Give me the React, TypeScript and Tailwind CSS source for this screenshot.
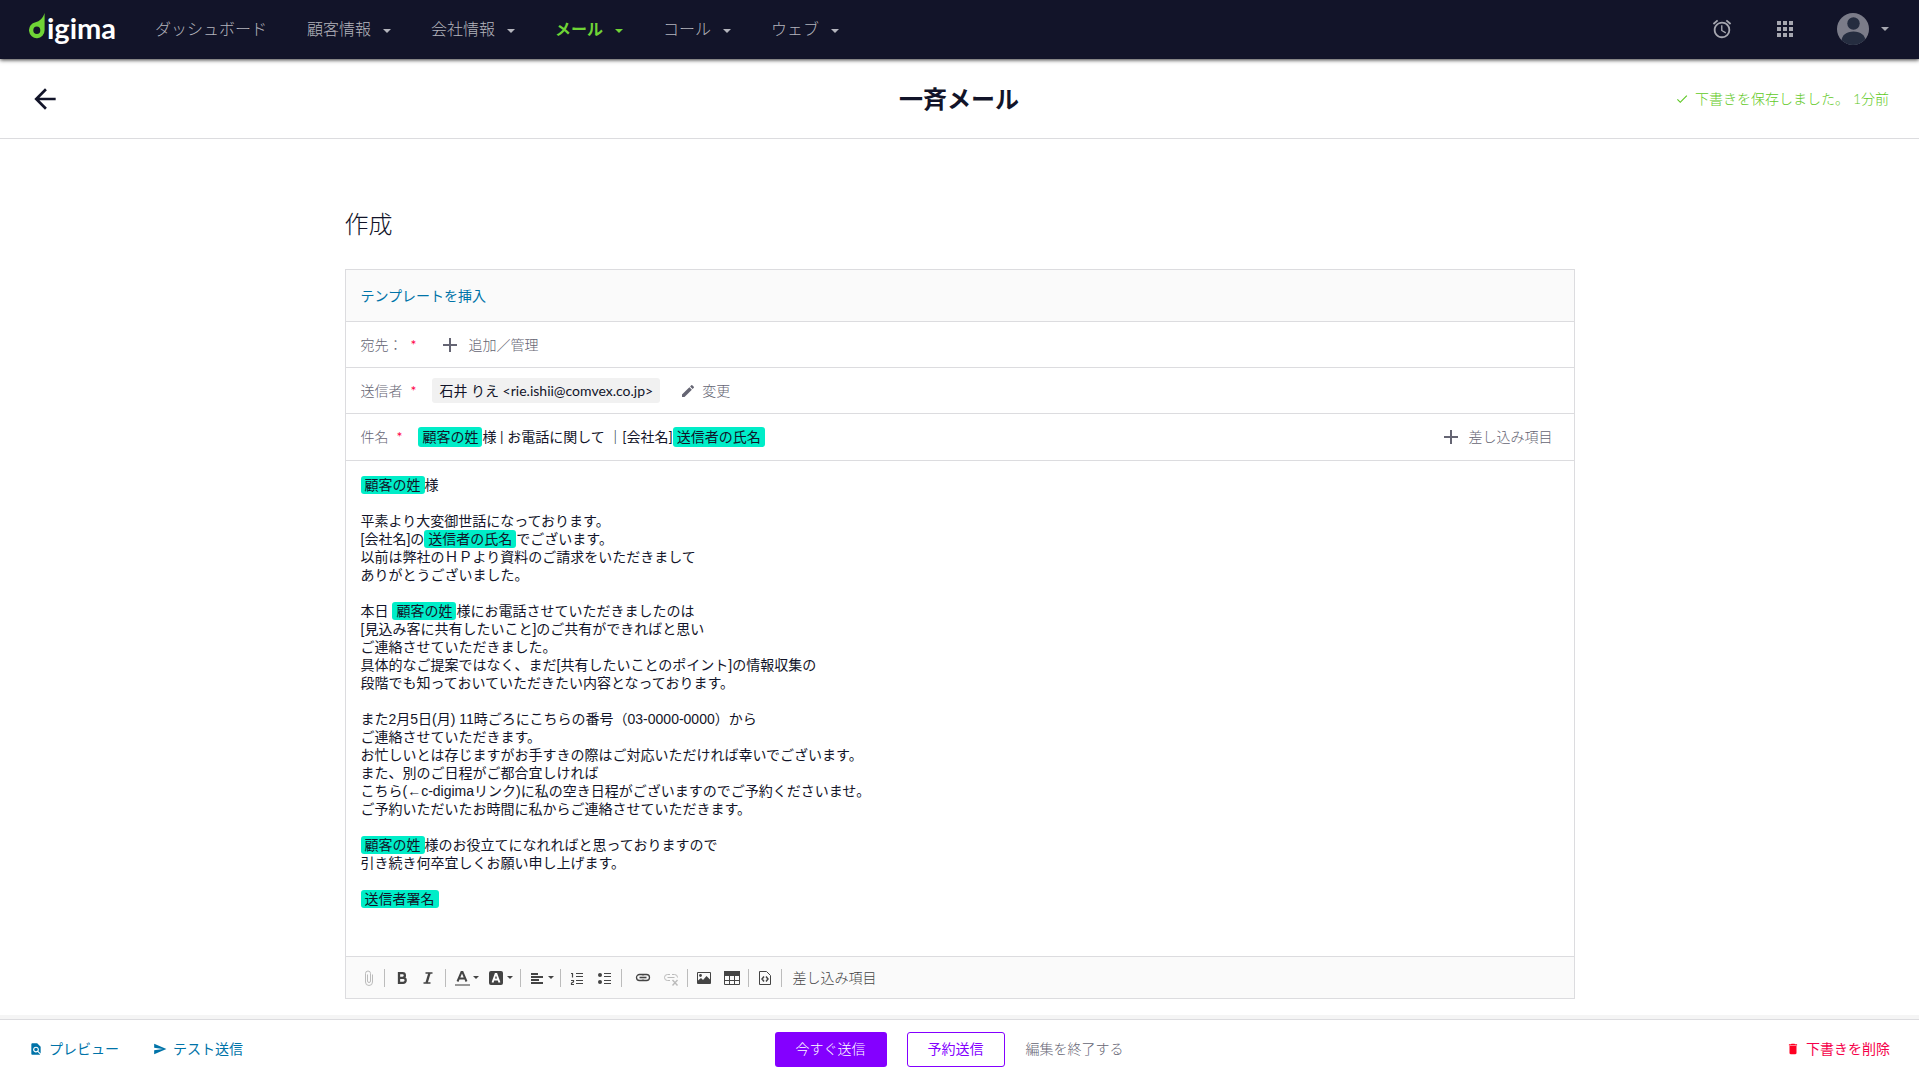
import type { ReactNode } from 'react';
import {
  MdAdd,
  MdAlarm,
  MdApps,
  MdArrowBack,
  MdCheck,
  MdDelete,
  MdEdit,
  MdFindInPage,
  MdSend,
} from 'react-icons/md';

interface NavItem {
  label: string;
  hasMenu?: boolean;
  active?: boolean;
}

const NAV_ITEMS: NavItem[] = [
  { label: 'ダッシュボード' },
  { label: '顧客情報', hasMenu: true },
  { label: '会社情報', hasMenu: true },
  { label: 'メール', hasMenu: true, active: true },
  { label: 'コール', hasMenu: true },
  { label: 'ウェブ', hasMenu: true },
];

// {{...}} marks a merge field
const BODY_LINES = [
  '{{顧客の姓}}様',
  '',
  '平素より大変御世話になっております。',
  '[会社名]の{{送信者の氏名}}でございます。',
  '以前は弊社のＨＰより資料のご請求をいただきまして',
  'ありがとうございました。',
  '',
  '本日 {{顧客の姓}}様にお電話させていただきましたのは',
  '[見込み客に共有したいこと]のご共有ができればと思い',
  'ご連絡させていただきました。',
  '具体的なご提案ではなく、まだ[共有したいことのポイント]の情報収集の',
  '段階でも知っておいていただきたい内容となっております。',
  '',
  'また2月5日(月) 11時ごろにこちらの番号（03-0000-0000）から',
  'ご連絡させていただきます。',
  'お忙しいとは存じますがお手すきの際はご対応いただければ幸いでございます。',
  'また、別のご日程がご都合宜しければ',
  'こちら(←c-digimaリンク)に私の空き日程がございますのでご予約くださいませ。',
  'ご予約いただいたお時間に私からご連絡させていただきます。',
  '',
  '{{顧客の姓}}様のお役立てになれればと思っておりますので',
  '引き続き何卒宜しくお願い申し上げます。',
  '',
  '{{送信者署名}}',
];

const SUBJECT = '{{顧客の姓}}様 | お電話に関して ｜[会社名]{{送信者の氏名}}';

const renderFields = (text: string) =>
  text.split(/(\{\{.+?\}\})/).map((part, index) =>
    part.startsWith('{{') ? (
      <span key={index} className="inline-block rounded-[3px] bg-[#00edc8] px-1">
        {part.slice(2, -2)}
      </span>
    ) : (
      part
    ),
  );

const Caret = ({ className = '' }: { className?: string }) => (
  <svg viewBox="0 0 8 4" className={`h-1 w-2 ${className}`} fill="currentColor" aria-hidden="true">
    <path d="M0 0h8L4 4z" />
  </svg>
);

const Logo = () => (
  <a href="#" className="flex h-8 w-[86px] items-start text-white">
    <svg viewBox="0 0 18 32" className="h-8 w-[18px] shrink-0" aria-hidden="true">
      <path
        fill="#6fd436"
        fillRule="evenodd"
        d="M15.600 0V17.200a7.800 8.100 0 1 1-9-8C10.500 8.500 14 5 15.600 0zM7.800 13.400a3.500 3.800 0 1 0 0 7.600 3.500 3.800 0 0 0 0-7.600z"
      />
    </svg>
    <span className="text-[29px] leading-[30px] font-bold">igima</span>
  </a>
);

const Header = () => (
  <header className="relative z-10 flex h-[59px] items-center bg-[#121429] pr-[30px] pb-0.5 pl-[29px] text-[#a6a7b0] shadow-[0_1px_4px_rgba(0,0,0,0.8)]">
    <Logo />
    <nav className="ml-10 flex flex-1 items-center gap-10">
      {NAV_ITEMS.map((item) => (
        <a
          key={item.label}
          href="#"
          className={`flex items-center gap-3 text-base leading-6 ${item.active ? 'font-bold text-[#6fd436]' : 'font-light text-[#b4b5bd]'}`}
        >
          {item.label}
          {item.hasMenu && <Caret className="mt-1" />}
        </a>
      ))}
    </nav>
    <button type="button" aria-label="アラーム" className="mr-10">
      <MdAlarm size={22} />
    </button>
    <button type="button" aria-label="アプリ" className="mr-10">
      <MdApps size={24} />
    </button>
    <button type="button" aria-label="アカウント" className="flex items-center gap-3">
      <svg viewBox="0 0 32 32" className="size-8" aria-hidden="true">
        <clipPath id="avatar">
          <circle cx="16" cy="16" r="16" />
        </clipPath>
        <g clipPath="url(#avatar)">
          <rect width="32" height="32" fill="#7b7c89" />
          <circle cx="16.500" cy="10.500" r="6.200" fill="#252d40" />
          <path d="M4.500 32v-4c0-5.500 5-9.500 12-9.500s12 4 12 9.500v4z" fill="#252d40" />
        </g>
      </svg>
      <Caret />
    </button>
  </header>
);

const TitleBar = () => (
  <div className="grid h-20 grid-cols-[1fr_auto_1fr] items-center border-b border-[#dcdcdf] pr-[30px] pl-[29px]">
    <a href="#" aria-label="戻る" className="justify-self-start text-[#121429]">
      <MdArrowBack size={32} />
    </a>
    <h1 className="text-2xl font-bold">一斉メール</h1>
    <p className="flex items-center gap-1.5 justify-self-end font-light text-[#5fc926]">
      <MdCheck size={14} />
      <span>下書きを保存しました。 1分前</span>
    </p>
  </div>
);

const Required = () => <span className="ml-2 text-[#ff0044]">*</span>;

const Row = ({ children, className = 'h-[46px]' }: { children: ReactNode; className?: string }) => (
  <div className={`flex items-center border-b border-[#dcdcdf] px-[15px] ${className}`}>{children}</div>
);

const Separator = () => <span className="h-[18px] w-px bg-[#bcbcbc]" />;

interface ToolProps {
  label: string;
  className: string;
  children: ReactNode;
}

const Tool = ({ label, className, children }: ToolProps) => (
  <button type="button" aria-label={label} className={`flex items-center justify-center ${className}`}>
    {children}
  </button>
);

const ToolCaret = () => (
  <svg viewBox="0 0 6 3" className="ml-[3px] h-[3px] w-[6px]" fill="currentColor" aria-hidden="true">
    <path d="M0 0h6L3 3z" />
  </svg>
);

const LinkGlyph = ({ broken = false }: { broken?: boolean }) => (
  <svg viewBox="0 0 16 16" className="size-4" fill="none" stroke="currentColor">
    {broken ? (
      <>
        <path d="M7 4.500H4.500a3 3 0 0 0 0 6H7M9 4.500h2.500a3 3 0 0 1 3 3M4.500 7.500h7" />
        <path d="M9.500 10l5 5.500M14.500 10l-5 5.500" strokeWidth="1.400" />
      </>
    ) : (
      <>
        <path d="M7.500 5.500V4.500h-3a3 3 0 0 0 0 6h3v-1M8.500 5.500V4.500h3a3 3 0 0 1 0 6h-3v-1" strokeWidth="1.300" />
        <path d="M4.500 7.500h7" strokeWidth="1.600" />
      </>
    )}
  </svg>
);

const Toolbar = () => (
  <div role="toolbar" className="flex h-[41px] items-center bg-[#fafafa] text-[#444] [&_svg]:shrink-0">
    <Tool label="添付" className="ml-2 w-[30px] text-[#bbb]">
      <svg viewBox="0 0 8 16" className="h-4 w-2" fill="none" stroke="currentColor">
        <path d="M2.500 4.500v6.500a1.500 1.500 0 0 0 3 0V3.500a2.500 2.500 0 0 0-5 0V12a3 3 0 0 0 7 0V4.500" />
      </svg>
    </Tool>
    <Separator />
    <Tool label="太字" className="ml-1 w-[26px]">
      <svg viewBox="0 0 16 16" className="size-4" fill="none" stroke="currentColor" strokeWidth="2.300">
        <path d="M5 3.200h3.600a2.200 2.200 0 0 1 0 4.600H5zM5 7.800h4.200a2.500 2.500 0 0 1 0 5H5z" />
      </svg>
    </Tool>
    <Tool label="斜体" className="w-[26px]">
      <svg viewBox="0 0 16 16" className="size-4" fill="none" stroke="currentColor">
        <path d="M5.500 3h7M3.500 13h7" strokeWidth="1.600" />
        <path d="M9.500 3l-3 10" strokeWidth="2.400" />
      </svg>
    </Tool>
    <span className="w-1" />
    <Separator />
    <Tool label="文字色" className="ml-2 w-[26px]">
      <svg viewBox="0 0 16 16" className="size-4" fill="none" stroke="currentColor">
        <path d="M3.500 11.500L7.500 2h1l4 9.500M5 8.500h6" strokeWidth="2" />
        <path d="M1 15h15" stroke="#999" strokeWidth="2" />
      </svg>
      <ToolCaret />
    </Tool>
    <Tool label="背景色" className="ml-2 w-[26px]">
      <svg viewBox="0 0 16 16" className="size-4" fill="none">
        <rect x="1" y="1" width="14" height="14" rx="2" fill="currentColor" />
        <path d="M4.500 12.500L7.600 4h.8l3.100 8.500M5.800 9.500h4.400" stroke="#fff" strokeWidth="1.900" />
      </svg>
      <ToolCaret />
    </Tool>
    <span className="w-1.5" />
    <Separator />
    <Tool label="配置" className="ml-2 w-[26px]">
      <svg viewBox="0 0 16 16" className="size-4" stroke="currentColor" strokeWidth="2">
        <path d="M2 4h7M2 7h12M2 10h8M2 13h12" />
      </svg>
      <ToolCaret />
    </Tool>
    <span className="w-[5px]" />
    <Separator />
    <Tool label="番号付きリスト" className="ml-[7px] w-[18px]">
      <svg viewBox="0 0 16 16" className="size-4" fill="none" stroke="currentColor">
        <path d="M7 3.500h7M7 6.500h7M7 10.500h7M7 13.500h7" />
        <path d="M2 3.500h1.500v4M2 10.500h2.500v1.500L2.500 13v1.500h2.500" strokeWidth="1.200" />
      </svg>
    </Tool>
    <Tool label="箇条書き" className="ml-2 w-5">
      <svg viewBox="0 0 16 16" className="size-4" fill="none" stroke="currentColor">
        <path d="M8 3.500h7M8 6.500h7M8 10.500h7M8 13.500h7" />
        <circle cx="4" cy="5" r="2" fill="currentColor" stroke="none" />
        <circle cx="4" cy="12" r="2" fill="currentColor" stroke="none" />
      </svg>
    </Tool>
    <span className="w-[7px]" />
    <Separator />
    <Tool label="リンク" className="ml-2 w-[26px]">
      <LinkGlyph />
    </Tool>
    <Tool label="リンク解除" className="w-[30px] text-[#bbb]">
      <LinkGlyph broken />
    </Tool>
    <span className="w-px" />
    <Separator />
    <Tool label="画像" className="ml-2 w-4">
      <svg viewBox="0 0 16 16" className="size-4" fill="none" stroke="currentColor">
        <path d="M1.500 2.500h13v11h-13z" />
        <path d="M2 13v-2.500l3-2.500 2 2 3.500-4L14 9.500V13z" fill="currentColor" stroke="none" />
        <circle cx="4.500" cy="5.500" r="1.400" fill="currentColor" stroke="none" />
      </svg>
    </Tool>
    <Tool label="表" className="ml-3 w-4">
      <svg viewBox="0 0 16 16" className="size-4" fill="none" stroke="currentColor">
        <path d="M.5 1.500h15v13H.5zM.5 10.500h15M5.500 5v9M10.500 5v9" />
        <path d="M0 1h16v5H0z" fill="currentColor" stroke="none" />
      </svg>
    </Tool>
    <span className="w-2" />
    <Separator />
    <Tool label="ソース" className="ml-2 w-4">
      <svg viewBox="0 0 16 16" className="size-4" fill="none" stroke="currentColor">
        <path d="M3 1.500h6.500l4 4v9h-11v-13z" />
        <path d="M7 6.500L5 9l2 2.500M9 6.500L11 9l-2 2.500" strokeWidth="1.500" />
      </svg>
    </Tool>
    <span className="w-2" />
    <Separator />
    <button type="button" className="ml-[11px] font-light">
      差し込み項目
    </button>
  </div>
);

const ComposeCard = () => (
  <section className="border border-[#dcdcdf]">
    <Row className="h-[52px] bg-[#fafafa]">
      <a href="#" className="text-[#0073a8]">
        テンプレートを挿入
      </a>
    </Row>
    <Row>
      <span className="font-light text-[#656573]">宛先：</span>
      <Required />
      <button type="button" className="ml-[22px] flex items-center gap-1.5 font-light text-[#656573]">
        <MdAdd size={24} />
        追加／管理
      </button>
    </Row>
    <Row>
      <span className="font-light text-[#656573]">送信者</span>
      <Required />
      <span className="ml-4 rounded-[3px] bg-[#f1f1f1] px-[7px] leading-[25px]">石井 りえ &lt;rie.ishii@comvex.co.jp&gt;</span>
      <button type="button" className="ml-5 flex items-center gap-1.5 font-light text-[#656573]">
        <MdEdit size={16} />
        変更
      </button>
    </Row>
    <Row className="h-[47px]">
      <span id="subject-label" className="font-light text-[#656573]">
        件名
      </span>
      <Required />
      <div
        role="textbox"
        aria-labelledby="subject-label"
        contentEditable
        suppressContentEditableWarning
        className="ml-4 flex-1 leading-5 whitespace-pre outline-none"
      >
        {renderFields(SUBJECT)}
      </div>
      <button type="button" className="mr-1.5 flex items-center gap-1.5 font-light text-[#656573]">
        <MdAdd size={24} />
        差し込み項目
      </button>
    </Row>
    <div
      role="textbox"
      aria-multiline="true"
      aria-label="本文"
      contentEditable
      suppressContentEditableWarning
      className="border-b border-[#dcdcdf] px-[15px] pt-[15px] pb-12 font-['Liberation_Sans','Noto_Sans_CJK_JP',sans-serif] leading-[18px] outline-none"
    >
      {BODY_LINES.map((line, index) => (
        <p key={index} className="h-[18px] whitespace-pre">
          {renderFields(line)}
        </p>
      ))}
    </div>
    <Toolbar />
  </section>
);

const Footer = () => (
  <footer className="sticky bottom-0 grid h-[61px] grid-cols-[1fr_auto_1fr] items-center border-t border-[#dcdcdf] bg-white px-[29px] pb-0.5 shadow-[0_-4px_0_#f5f5f5]">
    <div className="flex gap-[34px] text-[#0073a8]">
      <button type="button" className="flex items-center gap-1.5">
        <MdFindInPage size={14} />
        プレビュー
      </button>
      <button type="button" className="flex items-center gap-1.5">
        <MdSend size={14} />
        テスト送信
      </button>
    </div>
    <div className="flex items-center">
      <button type="button" className="mr-5 h-[35px] rounded-[3px] bg-[#8400ff] px-[21px] font-light text-white">
        今すぐ送信
      </button>
      <button type="button" className="h-[35px] rounded-[3px] border border-[#8400ff] px-5 text-[#8400ff]">
        予約送信
      </button>
      <button type="button" className="px-[21px] font-light text-[#656573]">
        編集を終了する
      </button>
    </div>
    <button type="button" className="flex items-center gap-1.5 justify-self-end text-[#f5004a]">
      <MdDelete size={14} className="text-[#ff0022]" />
      下書きを削除
    </button>
  </footer>
);

export default function App() {
  return (
    <div
      lang="ja"
      className="flex min-h-screen flex-col bg-white font-['Lato','Noto_Sans_CJK_JP',sans-serif] text-sm text-[#121429]"
    >
      <Header />
      <TitleBar />
      <main className="mx-auto w-full max-w-[1230px] flex-1 pt-16 pb-5">
        <h2 className="mb-6 text-2xl leading-[42px] font-light">作成</h2>
        <ComposeCard />
      </main>
      <Footer />
    </div>
  );
}
